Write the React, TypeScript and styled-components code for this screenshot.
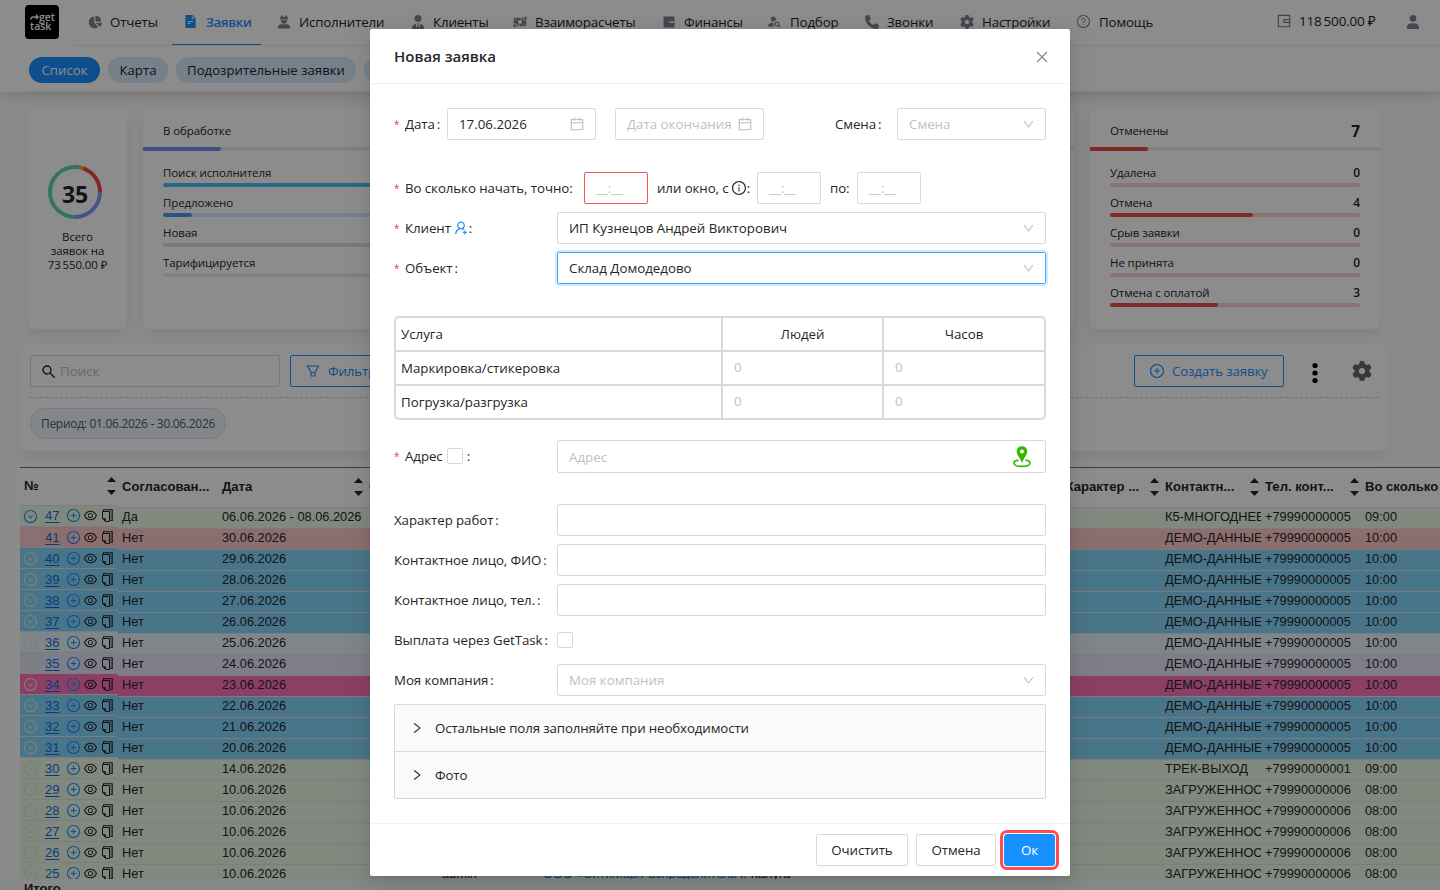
import * as React from 'react'
import {
	AiFillFileText,
	AiFillWallet,
	AiOutlineCalendar,
	AiOutlineClose,
	AiOutlineDown,
	AiOutlineDownCircle,
	AiOutlineEye,
	AiOutlineFilter,
	AiOutlineInfoCircle,
	AiOutlinePlusCircle,
	AiOutlineQuestionCircle,
	AiOutlineRight,
	AiOutlineUserAdd,
	AiOutlineWallet,
} from 'react-icons/ai'
import { FaChartPie, FaGear, FaMoneyBillTransfer, FaPhone, FaUserTie } from 'react-icons/fa6'
import { MdPersonSearch } from 'react-icons/md'
import styled, { createGlobalStyle, css } from 'styled-components'

const uiFont = `'Open Sans', 'Noto Sans', sans-serif`
const blue = '#1890ff'
const border = '#d9d9d9'

const GlobalStyle = createGlobalStyle`
	* {
		box-sizing: border-box;
	}

	body {
		margin: 0;
		overflow: hidden;
		background: #fff;
		color: #262626;
		font: 13.3px/20px ${uiFont};
	}

	svg {
		display: block;
		flex: none;
	}
`

const Page = styled.div`
	position: relative;
	width: 1440px;
	height: 890px;
	overflow: hidden;
	background: #fefefe;
`

/* Header */

const Header = styled.header`
	position: relative;
	height: 92px;
	background: #fff;
	box-shadow: 0 4px 14px rgba(0, 0, 0, 0.17);
`

const TopBar = styled.div`
	display: flex;
	height: 46px;
	padding-left: 25px;
`

const Logo = styled.div`
	width: 34px;
	height: 34px;
	margin: 5px 16px 0 0;
	padding: 7px 0 0 5px;

	border-radius: 4px;
	background: #000;
	color: #fff;
	font-size: 10.5px;
	font-weight: 600;
	line-height: 8px;
`

const LogoLine = styled.div`
	display: flex;
	align-items: center;
	height: 9px;
`

const Nav = styled.nav`
	display: flex;
	flex: 1;
	border-bottom: 1px solid #ebebeb;
`

type NavItemProps = { $width: number; $active?: boolean }
const NavItem = styled.a<NavItemProps>`
	display: flex;
	flex: none;
	align-items: center;
	gap: 8px;
	width: ${props => props.$width - 5}px;
	height: 45px;
	margin-right: 5px;
	padding: 0 0 2px 11px;

	color: #1f2430;
	font-size: 13.3px;
	letter-spacing: -0.15px;
	white-space: nowrap;

	svg {
		color: #7c828c;
	}

	&:first-child {
		padding-left: 13px;
	}

	${props =>
		props.$active &&
		css`
			padding-bottom: 1px;
			border-bottom: 1px solid ${blue};
			color: ${blue};
			font-size: 13px;
			font-weight: 600;
			letter-spacing: -0.25px;

			svg {
				color: ${blue};
			}
		`}
`

const Balance = styled.div`
	display: flex;
	align-items: center;
	gap: 7px;
	width: 120px;
	height: 42px;
	color: #262626;
	font-size: 13.5px;
	letter-spacing: -0.2px;
	white-space: nowrap;

	svg {
		color: #777;
	}
`

const SubNav = styled.div`
	display: flex;
	gap: 8px;
	height: 46px;
	margin-left: 25px;
	padding: 11px 0 0 4px;
	border-bottom: 1px solid #f0f0f0;
`

type PillProps = { $width: number; $active?: boolean }
const Pill = styled.a<PillProps>`
	flex: none;
	width: ${props => props.$width}px;
	height: 26px;
	border-radius: 13px;
	background: ${props => (props.$active ? blue : '#d6e9fc')};
	color: ${props => (props.$active ? '#fff' : '#1f2430')};
	font-size: 13.2px;
	line-height: 26px;
	text-align: center;
	white-space: nowrap;
`

/* Statistics */

const Stats = styled.section`
	display: flex;
	gap: 16px;
	height: 221px;
	margin: 16px 60px 0 28px;
`

type StatCardProps = { $width?: number }
const StatCard = styled.div<StatCardProps>`
	flex: ${props => (props.$width ? `0 0 ${props.$width}px` : 1)};
	border-radius: 6px;
	background: #fff;
	box-shadow: 0 5px 14px rgba(0, 0, 0, 0.09);
	font-size: 11.5px;
	letter-spacing: -0.1px;
`

const TotalCard = styled(StatCard)`
	display: flex;
	flex-direction: column;
	align-items: center;
	padding-top: 57px;
	line-height: 14px;
	text-align: center;
`

const Donut = styled.div`
	display: grid;
	place-items: center;
	width: 54px;
	height: 54px;
	margin: 0 5px 11px 0;
	font-size: 23px;
	font-weight: 700;

	> * {
		grid-area: 1 / 1;
	}

	span {
		margin-top: 3px;
	}
`

const StatHead = styled.div`
	display: flex;
	align-items: center;
	justify-content: space-between;
	height: 39px;
	padding: 7px 20px 0;

	b {
		font-size: 15.5px;
	}
`

const StatRow = styled.div`
	display: flex;
	justify-content: space-between;
	height: 20px;
	margin-top: 6px;
	line-height: 20px;

	b {
		font-size: 12px;
		font-weight: 600;
	}
`

const StatList = styled.div`
	padding: 6px 20px;
`

type BarProps = { $track: string; $flat?: boolean }
const Bar = styled.div<BarProps>`
	height: 4px;
	overflow: hidden;
	border-radius: ${props => (props.$flat ? 0 : 2)}px;
	background: ${props => props.$track};
`

const BarFill = styled.div`
	height: 4px;
	border-radius: 0 2px 2px 0;
`

/* Toolbar over the table */

const Toolbar = styled.section`
	height: 106px;
	margin: 16px 52px 0 20px;
	padding: 10px;
	border-radius: 6px;
	background: #fff;
	box-shadow: 0 5px 14px rgba(0, 0, 0, 0.09);
`

const ToolbarRow = styled.div`
	display: flex;
	align-items: center;
	height: 43px;
	padding-bottom: 10px;
	border-bottom: 1px dashed #d0d0d0;
`

const Search = styled.div`
	display: flex;
	align-items: center;
	gap: 5px;
	width: 250px;
	height: 32px;
	margin-right: 10px;
	padding-left: 11px;
	border: 1px solid ${border};
	border-radius: 2px;
	color: #bfbfbf;

	svg {
		color: #222;
	}
`

const OutlineButton = styled.button<{ $width: number }>`
	display: flex;
	align-items: center;
	gap: 7px;
	width: ${props => props.$width}px;
	height: 32px;
	padding: 0 0 0 14px;
	border: 1px solid ${blue};
	border-radius: 2px;
	background: #fff;
	color: ${blue};
	font: inherit;
	letter-spacing: -0.15px;
	white-space: nowrap;
`

const Spacer = styled.div`
	flex: 1;
`

const Dots = styled.svg`
	margin: 3px 33px 0 27px;
`

const SettingsButton = styled.span`
	margin-right: 6px;
	color: #666;
`

const Tag = styled.div`
	display: inline-block;
	height: 31px;
	margin-top: 10px;
	padding: 0 10px;
	border: 1px solid #d6dcf0;
	border-radius: 16px;
	background: #eef4fb;
	color: #595959;
	font-size: 12px;
	letter-spacing: -0.3px;
	line-height: 29px;
`

/* Orders table */

const Orders = styled.section`
	display: flex;
	height: 412px;
	margin: 16px 0 0 20px;
	overflow: hidden;
	border-top: 1px solid #6e6e6e;
	font: 12.8px/20px 'Liberation Sans', Arial, sans-serif;
`

const FixedColumn = styled.div`
	width: 98px;
`

const ScrollColumns = styled.div`
	flex: 1;
	min-width: 0;
	overflow: hidden;
`

type HeadRowProps = { $height: number }
const HeadRow = styled.div<HeadRowProps>`
	display: flex;
	width: 1350px;
	height: ${props => props.$height}px;
	border-bottom: 1px solid #e4e4e4;
	background: #fff;
	font-weight: 700;
`

type CellProps = { $width: number }
const HeadCell = styled.div<CellProps>`
	display: flex;
	flex: none;
	align-items: center;
	justify-content: space-between;
	width: ${props => props.$width}px;
	padding: 0 2px 2px 4px;
	font-size: 13.1px;
	white-space: nowrap;

	svg {
		margin-top: 1px;
	}
`

const FixedHeadRow = styled(HeadRow)`
	width: 98px;
`

type RowProps = { $color: string; $first?: boolean }
const Row = styled.div<RowProps>`
	display: flex;
	width: 1350px;
	height: 21px;
	border-bottom: 1px solid #e4e0e0;
	background: ${props => props.$color};
	line-height: 18px;
`

const FixedRow = styled(Row)`
	align-items: center;
	width: 98px;
	padding: 0 0 ${props => (props.$first ? 2 : 0)}px 3px;
	line-height: 20px;

	> svg {
		margin-top: ${props => (props.$first ? 3 : 0)}px;
	}
`

const Cell = styled.div<CellProps>`
	flex: none;
	width: ${props => props.$width}px;
	padding-left: 4px;
	overflow: hidden;
	white-space: nowrap;

	span {
		display: block;
		overflow: hidden;
	}
`

const CellLink = styled.a`
	color: #0a6fe0;
	letter-spacing: -0.1px;
`

const Num = styled.a`
	width: 14px;
	margin: 1px 7px 0 7px;
	color: #0a6fe0;
	font-size: 13px;
	text-decoration: underline;
	text-underline-offset: 2px;
`

const RowIcons = styled.div`
	display: flex;
	align-items: center;
	gap: 2px;
	color: #222;

	svg:first-child {
		color: ${blue};
	}

	svg:last-child {
		margin-left: 1px;
	}
`

const TotalRow = styled.div`
	height: 20px;
	padding-left: 24px;
	background: #f7f7f7;
	font: 700 13px/20px 'Liberation Sans', Arial, sans-serif;
`

/* Modal */

const Overlay = styled.div`
	position: absolute;
	inset: 0;
	padding: 29px 370px 0;
	background: rgba(0, 0, 0, 0.45);
`

const Modal = styled.div`
	display: flex;
	flex-direction: column;
	height: 847px;
	border-radius: 2px;
	background: #fff;
	box-shadow: 0 3px 6px -4px rgba(0, 0, 0, 0.12), 0 6px 16px rgba(0, 0, 0, 0.08),
		0 9px 28px 8px rgba(0, 0, 0, 0.05);
`

const ModalHeader = styled.div`
	display: flex;
	align-items: center;
	justify-content: space-between;
	height: 55px;
	padding: 0 20px 0 24px;
	border-bottom: 1px solid #f0f0f0;
	font-size: 15px;
	font-weight: 600;

	svg {
		margin-top: 1px;
		color: #8c8c8c;
	}
`

const ModalBody = styled.div`
	flex: 1;
	padding: 24px;
`

const ModalFooter = styled.div`
	display: flex;
	justify-content: flex-end;
	gap: 8px;
	height: 53px;
	padding: 10px 15px 10px;
	border-top: 1px solid #f0f0f0;
`

type FormRowProps = { $gap?: number }
const FormRow = styled.div<FormRowProps>`
	display: flex;
	align-items: center;
	min-height: 32px;
	margin-bottom: ${props => props.$gap ?? 8}px;
`

type LabelProps = { $width?: number; $required?: boolean; $left?: number }
const Label = styled.label<LabelProps>`
	display: flex;
	flex: none;
	align-items: center;
	width: ${props => (props.$width ? `${props.$width}px` : 'auto')};
	margin-left: ${props => props.$left ?? 0}px;
	letter-spacing: -0.08px;
	white-space: nowrap;

	${props =>
		props.$required &&
		css`
			&::before {
				content: '*';
				width: 11px;
				padding-top: 1px;
				color: #ff4d4f;
				font-family: 'Liberation Sans', sans-serif;
				font-size: 14px;
			}
		`}

	svg {
		margin-left: 2px;
	}
`

const Colon = styled.span`
	margin-left: 2px;
`

type FieldProps = {
	$width?: number
	$left?: number
	$filled?: boolean
	$invalid?: boolean
	$focused?: boolean
}
const Field = styled.div<FieldProps>`
	display: flex;
	flex: ${props => (props.$width ? `0 0 ${props.$width}px` : 1)};
	align-items: center;
	justify-content: space-between;
	height: 32px;
	margin-left: ${props => props.$left ?? 0}px;
	padding: 0 10px 0 11px;
	border: 1px solid ${props => (props.$invalid ? '#ff4d4f' : props.$focused ? '#40a9ff' : border)};
	border-radius: 2px;
	box-shadow: ${props => (props.$focused ? '0 0 0 2px rgba(24, 144, 255, 0.2)' : 'none')};
	color: ${props => (props.$filled ? '#262626' : '#bfbfbf')};
	white-space: nowrap;

	svg {
		color: #bfbfbf;
	}
`

const AddressField = styled(Field)`
	height: 33px;
	padding-right: 14px;
`

const Checkbox = styled.span`
	width: 16px;
	height: 16px;
	border: 1px solid ${border};
	border-radius: 2px;
	background: #fff;
`

const AddressLabel = styled(Label)`
	padding-bottom: 1px;

	${Checkbox} {
		margin: 0 2px 0 4px;
	}
`

const Services = styled.div`
	display: grid;
	grid-template-columns: 325px 159px 1fr;
	gap: 2px;
	height: 104px;
	margin: 32px 0 20px;
	padding: 2px;
	overflow: hidden;
	border-radius: 5px;
	background: ${border};
`

type ServiceCellProps = { $kind?: 'center' | 'count' }
const ServiceCell = styled.div<ServiceCellProps>`
	padding: ${props => (props.$kind === 'count' ? '5px 11px' : '6px 5px')};
	background: #fff;
	color: ${props => (props.$kind === 'count' ? '#bfbfbf' : '#262626')};
	text-align: ${props => (props.$kind === 'center' ? 'center' : 'left')};

	&:first-child {
		border-top-left-radius: 3px;
	}

	&:nth-child(3) {
		border-top-right-radius: 3px;
	}

	&:nth-child(7) {
		border-bottom-left-radius: 3px;
	}

	&:last-child {
		border-bottom-right-radius: 3px;
	}
`

const Collapse = styled.div`
	height: 95px;
	border: 1px solid ${border};
	border-radius: 2px;
	background: #fafafa;
`

const CollapsePanel = styled.div`
	display: flex;
	align-items: center;
	gap: 11px;
	height: 46px;
	padding-left: 15px;
	letter-spacing: -0.12px;

	& + & {
		height: 47px;
		border-top: 1px solid ${border};
	}
`

type ButtonProps = { $width: number; $primary?: boolean }
const Button = styled.button<ButtonProps>`
	width: ${props => props.$width}px;
	height: 32px;
	padding: 0;
	border: 1px solid ${props => (props.$primary ? blue : border)};
	border-radius: 2px;
	background: ${props => (props.$primary ? blue : '#fff')};
	color: ${props => (props.$primary ? '#fff' : '#262626')};
	font: inherit;
	letter-spacing: -0.1px;
	box-shadow: 0 2px 0 rgba(0, 0, 0, 0.015);

	${props =>
		props.$primary &&
		css`
			outline: 3px solid #ff4d4f;
			outline-offset: 1px;
			border-radius: 3px;
		`}
`

const WorkerIcon = () => (
	<svg width="14" height="14" viewBox="0 0 14 14" fill="currentColor">
		<path d="M3.2 3.6C3.3 1.7 4.5.5 6 .3V2h2V.3c1.5.2 2.7 1.4 2.8 3.3h.6v1H2.6v-1zM3.8 5.300h6.400C10.100 7.200 8.800 8.700 7 8.700S3.900 7.200 3.800 5.300zM1 13.500v-1.300c0-1.700 1.400-2.900 3.200-2.900h5.600c1.800 0 3.200 1.200 3.200 2.900v1.300z" />
	</svg>
)

const PersonIcon = () => (
	<svg width="12" height="14" viewBox="0 0 12 14" fill="currentColor">
		<circle cx="6" cy="3.4" r="3.3" />
		<path d="M0 14v-1.800C0 9.500 2.700 8.200 6 8.200s6 1.300 6 4V14z" />
	</svg>
)

const SearchIcon = () => (
	<svg width="13" height="13" viewBox="0 0 13 13" fill="none" stroke="currentColor" strokeLinecap="round">
		<circle cx="5" cy="5" r="4" strokeWidth="1.3" />
		<path d="M8 8l4.300 4.300" strokeWidth="1.3" />
	</svg>
)

const CopyIcon = () => (
	<svg width="12" height="13" viewBox="0 0 12 13" fill="none" stroke="currentColor">
		<path d="M2.500 2V.8h8.700v10.700H9.500" strokeWidth="1.1" />
		<path d="M1.500 2.500h7v9.900H4.500l-3-3z" strokeWidth="1" />
		<path d="M1.500 9.500h3v3z" fill="currentColor" strokeWidth="0.5" />
		<path d="M9.900 1.500v9.500" opacity="0.4" />
	</svg>
)

const PinIcon = () => (
	<svg width="18" height="22" viewBox="0 0 18 22">
		<path
			d="M5.500 14.100c-2.600.4-4.500 1.500-4.500 2.900 0 2 3.600 3.400 8 3.400s8-1.400 8-3.400c0-1.400-1.900-2.500-4.500-2.900"
			fill="none"
			stroke="#36b800"
			strokeWidth="1.6"
		/>
		<path
			d="M9 .3C5.900.3 3.700 2.500 3.700 5.400c0 3.400 4 7.600 5.300 11.600 1.300-4 5.300-8.200 5.300-11.600C14.300 2.500 12.100.3 9 .3zm0 7.200a2 2 0 110-4 2 2 0 010 4z"
			fill="#36b800"
			fillRule="evenodd"
		/>
	</svg>
)

const SortIcon = () => (
	<svg width="9" height="20" viewBox="0 0 9 20" fill="currentColor">
		<path d="M4.500 1L9 6H0zM4.500 19L9 14H0z" />
	</svg>
)

const donutParts = [
	{ color: '#7b9bf5', from: 0, size: 90 },
	{ color: '#5ad8a6', from: 90, size: 189.6 },
	{ color: '#e8b90c', from: 279.6, size: 9.9 },
	{ color: '#f04848', from: 289.5, size: 70.5 },
]

const processing = [
	{ name: 'Поиск исполнителя', track: '#48c0f4', width: 0 },
	{ name: 'Предложено', track: '#d9ecff', width: 29 },
	{ name: 'Новая', track: '#dcdcf0', width: 0 },
	{ name: 'Тарифицируется', track: '#ececec', width: 0 },
]

const cancelled = [
	{ name: 'Удалена', count: 0, width: 0 },
	{ name: 'Отмена', count: 4, width: 57 },
	{ name: 'Срыв заявки', count: 0, width: 0 },
	{ name: 'Не принята', count: 0, width: 0 },
	{ name: 'Отмена с оплатой', count: 3, width: 43 },
]

const green = '#ecfae8'
const sky = '#83d5fa'

type Order = {
	id: number
	date: string
	color: string
	contact: string
	phone: string
	time: string
	author?: string
	client?: string
}
const demo = { contact: 'ДЕМО-ДАННЫЕ', phone: '+79990000005', time: '10:00' }
const loaded = { contact: 'ЗАГРУЖЕННОСТЬ', phone: '+79990000006', time: '08:00', date: '10.06.2026', color: green }
const orders: Order[] = [
	{ id: 47, date: '06.06.2026 - 08.06.2026', color: green, contact: 'К5-МНОГОДНЕВН', phone: '+79990000005', time: '09:00' },
	{ id: 41, date: '30.06.2026', color: '#ffc9c9', ...demo },
	{ id: 40, date: '29.06.2026', color: sky, ...demo },
	{ id: 39, date: '28.06.2026', color: sky, ...demo },
	{ id: 38, date: '27.06.2026', color: sky, ...demo },
	{ id: 37, date: '26.06.2026', color: sky, ...demo },
	{ id: 36, date: '25.06.2026', color: '#e8f4f8', ...demo },
	{ id: 35, date: '24.06.2026', color: '#e6e6fa', ...demo },
	{ id: 34, date: '23.06.2026', color: '#ff74b8', ...demo },
	{ id: 33, date: '22.06.2026', color: sky, ...demo },
	{ id: 32, date: '21.06.2026', color: sky, ...demo },
	{ id: 31, date: '20.06.2026', color: sky, ...demo },
	{ id: 30, date: '14.06.2026', color: green, contact: 'ТРЕК-ВЫХОД', phone: '+79990000001', time: '09:00' },
	{ id: 29, ...loaded },
	{ id: 28, ...loaded },
	{ id: 27, ...loaded },
	{ id: 26, ...loaded },
	{ id: 25, ...loaded, author: 'admin', client: 'ООО «СитиМар/Распределитель' },
]

const expandColor = (order: Order) => {
	if (order.id === 47) return blue
	return order.color === green || order.id === 36 || order.id === 35 ? '#dcdfe2' : '#e8e8e8'
}

const AppHeader = () => (
	<Header>
		<TopBar>
			<Logo>
				<LogoLine>
					<svg width="9" height="6" viewBox="0 0 9 6" fill="none" stroke="#fff" strokeWidth="1.3">
						<path d="M.6 5.500C.8 3.800 2 3 3.500 3H8M6 .8L8.200 3 6 5.200" />
					</svg>
					get
				</LogoLine>
				<LogoLine>task</LogoLine>
			</Logo>
			<Nav>
				<NavItem $width={97}><FaChartPie size={14} />Отчеты</NavItem>
				<NavItem $width={94} $active><AiFillFileText size={15} />Заявки</NavItem>
				<NavItem $width={134}><WorkerIcon />Исполнители</NavItem>
				<NavItem $width={102}><FaUserTie size={14} />Клиенты</NavItem>
				<NavItem $width={149}><FaMoneyBillTransfer size={14} />Взаиморасчеты</NavItem>
				<NavItem $width={105}><AiFillWallet size={14} />Финансы</NavItem>
				<NavItem $width={98}><MdPersonSearch size={15} />Подбор</NavItem>
				<NavItem $width={95}><FaPhone size={14} />Звонки</NavItem>
				<NavItem $width={116}><FaGear size={14} />Настройки</NavItem>
				<NavItem $width={110}><AiOutlineQuestionCircle size={15} />Помощь</NavItem>
				<Spacer />
				<Balance><AiOutlineWallet size={16} />118&#8201;500.00 ₽</Balance>
				<NavItem $width={44}><PersonIcon /></NavItem>
			</Nav>
		</TopBar>
		<SubNav>
			<Pill $width={71} $active>Список</Pill>
			<Pill $width={60}>Карта</Pill>
			<Pill $width={180}>Подозрительные заявки</Pill>
			<Pill $width={120} />
		</SubNav>
	</Header>
)

const StatsBlock = () => (
	<Stats>
		<TotalCard $width={99}>
			<Donut>
				<svg width="54" height="54" viewBox="0 0 54 54" fill="none" strokeWidth="4">
					{donutParts.map(part => (
						<circle
							key={part.color}
							cx="27"
							cy="27"
							r="25"
							stroke={part.color}
							pathLength="360"
							strokeDasharray={`${part.size} 360`}
							strokeDashoffset={-part.from}
						/>
					))}
				</svg>
				<span>35</span>
			</Donut>
			Всего
			<br />
			заявок на
			<br />
			73&#8201;550.00 ₽
		</TotalCard>
		<StatCard>
			<StatHead>В обработке</StatHead>
			<Bar $track="#ececec" $flat>
				<BarFill style={{ width: 78, background: '#7593f0' }} />
			</Bar>
			<StatList>
				{processing.map(item => (
					<React.Fragment key={item.name}>
						<StatRow>{item.name}</StatRow>
						<Bar $track={item.track}>
							<BarFill style={{ width: item.width, background: '#4d9df5' }} />
						</Bar>
					</React.Fragment>
				))}
			</StatList>
		</StatCard>
		<StatCard $width={290}>
			<StatHead />
			<Bar $track="#ececec" $flat />
		</StatCard>
		<StatCard $width={290}>
			<StatHead>
				Отменены<b>7</b>
			</StatHead>
			<Bar $track="#ececec" $flat>
				<BarFill style={{ width: '20%', background: '#f04848' }} />
			</Bar>
			<StatList>
				{cancelled.map(item => (
					<React.Fragment key={item.name}>
						<StatRow>
							{item.name}
							<b>{item.count}</b>
						</StatRow>
						<Bar $track="#f9d0d0">
							<BarFill style={{ width: `${item.width}%`, background: '#f04848' }} />
						</Bar>
					</React.Fragment>
				))}
			</StatList>
		</StatCard>
	</Stats>
)

const OrdersTable = () => (
	<>
		<Orders>
			<FixedColumn>
				<FixedHeadRow $height={38}>
					<HeadCell $width={98}>№<SortIcon /></HeadCell>
				</FixedHeadRow>
				{orders.map((order, i) => (
					<FixedRow key={order.id} $color={order.color} $first={i === 0}>
						<AiOutlineDownCircle size={15} color={expandColor(order)} />
						<Num>{order.id}</Num>
						<RowIcons>
							<AiOutlinePlusCircle size={15} />
							<AiOutlineEye size={15} />
							<CopyIcon />
						</RowIcons>
					</FixedRow>
				))}
			</FixedColumn>
			<ScrollColumns>
				<HeadRow $height={40}>
					<HeadCell $width={100}>Согласован...</HeadCell>
					<HeadCell $width={147}>Дата<SortIcon /></HeadCell>
					<HeadCell $width={696}>Статус</HeadCell>
					<HeadCell $width={100}>Характер ...<SortIcon /></HeadCell>
					<HeadCell $width={100}>Контактн...<SortIcon /></HeadCell>
					<HeadCell $width={100}>Тел. конт...<SortIcon /></HeadCell>
					<HeadCell $width={100}>Во сколько</HeadCell>
				</HeadRow>
				{orders.map((order, i) => (
					<Row key={order.id} $color={order.color}>
						<Cell $width={100}>{i === 0 ? 'Да' : 'Нет'}</Cell>
						<Cell $width={220}>{order.date}</Cell>
						<Cell $width={101}>{order.author}</Cell>
						<Cell $width={622}>
							{order.client && (
								<>
									<CellLink>{order.client}</CellLink> г. Калуга
								</>
							)}
						</Cell>
						<Cell $width={100}><span>{order.contact}</span></Cell>
						<Cell $width={100}>{order.phone}</Cell>
						<Cell $width={100}>{order.time}</Cell>
					</Row>
				))}
			</ScrollColumns>
		</Orders>
		<TotalRow>Итого</TotalRow>
	</>
)

const NewOrderModal = () => (
	<Modal>
		<ModalHeader>
			Новая заявка
			<AiOutlineClose size={16} />
		</ModalHeader>
		<ModalBody>
			<FormRow $gap={32}>
				<Label $width={53} $required>Дата<Colon>:</Colon></Label>
				<Field $width={149} $filled>17.06.2026<AiOutlineCalendar size={16} /></Field>
				<Field $width={149} $left={19}>Дата окончания<AiOutlineCalendar size={16} /></Field>
				<Label $width={62} $left={71}>Смена<Colon>:</Colon></Label>
				<Field $width={149}>Смена<AiOutlineDown size={13} /></Field>
			</FormRow>
			<FormRow>
				<Label $width={190} $required>Во сколько начать, точно:</Label>
				<Field $width={64} $invalid>__:__</Field>
				<Label $width={100} $left={9}>или окно, с<AiOutlineInfoCircle size={16} />:</Label>
				<Field $width={64}>__:__</Field>
				<Label $width={27} $left={9}>по:</Label>
				<Field $width={64}>__:__</Field>
			</FormRow>
			<FormRow>
				<Label $width={163} $required>
					Клиент<AiOutlineUserAdd size={16} color={blue} />:
				</Label>
				<Field $filled>ИП Кузнецов Андрей Викторович<AiOutlineDown size={13} /></Field>
			</FormRow>
			<FormRow>
				<Label $width={163} $required>Объект<Colon>:</Colon></Label>
				<Field $filled $focused>Склад Домодедово<AiOutlineDown size={13} /></Field>
			</FormRow>
			<Services>
				<ServiceCell>Услуга</ServiceCell>
				<ServiceCell $kind="center">Людей</ServiceCell>
				<ServiceCell $kind="center">Часов</ServiceCell>
				<ServiceCell>Маркировка/стикеровка</ServiceCell>
				<ServiceCell $kind="count">0</ServiceCell>
				<ServiceCell $kind="count">0</ServiceCell>
				<ServiceCell>Погрузка/разгрузка</ServiceCell>
				<ServiceCell $kind="count">0</ServiceCell>
				<ServiceCell $kind="count">0</ServiceCell>
			</Services>
			<FormRow $gap={31}>
				<AddressLabel $width={163} $required>Адрес<Checkbox /><Colon>:</Colon></AddressLabel>
				<AddressField>Адрес<PinIcon /></AddressField>
			</FormRow>
			<FormRow>
				<Label $width={163}>Характер работ<Colon>:</Colon></Label>
				<Field />
			</FormRow>
			<FormRow>
				<Label $width={163}>Контактное лицо, ФИО<Colon>:</Colon></Label>
				<Field />
			</FormRow>
			<FormRow>
				<Label $width={163}>Контактное лицо, тел.<Colon>:</Colon></Label>
				<Field />
			</FormRow>
			<FormRow>
				<Label $width={163}>Выплата через GetTask<Colon>:</Colon></Label>
				<Checkbox />
			</FormRow>
			<FormRow>
				<Label $width={163}>Моя компания<Colon>:</Colon></Label>
				<Field>Моя компания<AiOutlineDown size={13} /></Field>
			</FormRow>
			<Collapse>
				<CollapsePanel><AiOutlineRight size={14} />Остальные поля заполняйте при необходимости</CollapsePanel>
				<CollapsePanel><AiOutlineRight size={14} />Фото</CollapsePanel>
			</Collapse>
		</ModalBody>
		<ModalFooter>
			<Button $width={92}>Очистить</Button>
			<Button $width={80}>Отмена</Button>
			<Button $width={51} $primary>Ок</Button>
		</ModalFooter>
	</Modal>
)

export default function App() {
	return (
		<Page>
			<GlobalStyle />
			<AppHeader />
			<StatsBlock />
			<Toolbar>
				<ToolbarRow>
					<Search><SearchIcon />Поиск</Search>
					<OutlineButton $width={110}><AiOutlineFilter size={16} />Фильтры</OutlineButton>
					<Spacer />
					<OutlineButton $width={150}><AiOutlinePlusCircle size={16} />Создать заявку</OutlineButton>
					<Dots width="8" height="22" viewBox="0 0 8 22">
						<circle cx="4" cy="3.5" r="2.6" />
						<circle cx="4" cy="11" r="2.6" />
						<circle cx="4" cy="18.5" r="2.6" />
					</Dots>
					<SettingsButton><FaGear size={20} /></SettingsButton>
				</ToolbarRow>
				<Tag>Период: 01.06.2026 - 30.06.2026</Tag>
			</Toolbar>
			<OrdersTable />
			<Overlay>
				<NewOrderModal />
			</Overlay>
		</Page>
	)
}
